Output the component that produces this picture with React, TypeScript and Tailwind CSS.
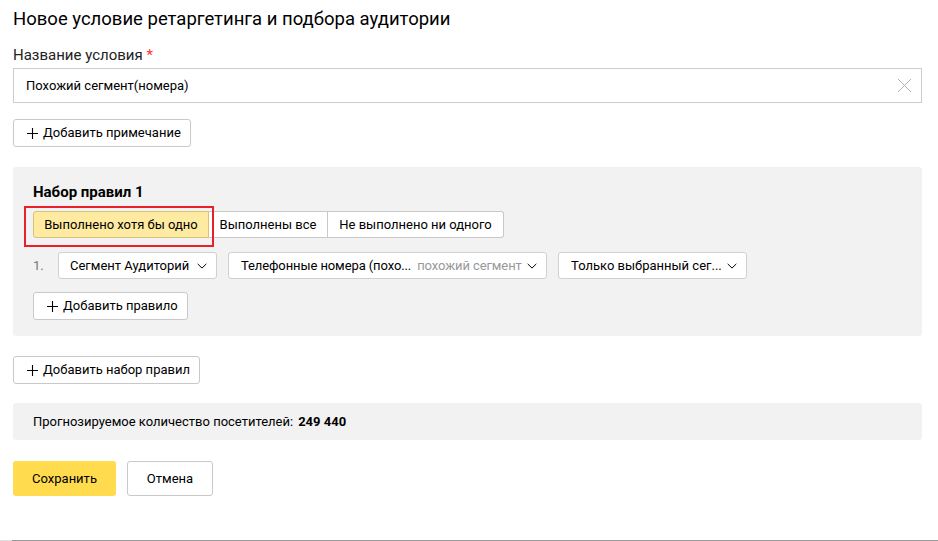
import React from 'react';

function Plus() {
  return (
    <svg width="11" height="11" viewBox="0 0 11 11" className="shrink-0">
      <path d="M5.5 0v11M0 5.5h11" stroke="#000" strokeWidth="1.1" />
    </svg>
  );
}

function Chevron() {
  return (
    <svg width="10" height="6" viewBox="0 0 10 6" className="shrink-0">
      <path d="M0.7 0.9l4.3 4.2L9.3 0.9" stroke="#000" strokeWidth="1" fill="none" />
    </svg>
  );
}

function GhostButton({ children }: { children: React.ReactNode }) {
  return (
    <button className="h-[28px] flex items-center gap-[5px] whitespace-nowrap border border-[#c9c9c9] rounded-[3px] bg-white pl-[13px] pr-[9px] text-[13px] text-black">
      <Plus />
      {children}
    </button>
  );
}

export default function App() {
  return (
    <div className="w-[938px] h-[541px] bg-white text-black flex flex-col overflow-hidden" style={{ fontFamily: 'Roboto, "Liberation Sans", sans-serif' }}>
      <div className="pl-[13px] pr-[16px] flex flex-col">
        {/* Header */}
        <h1 className="text-[18.5px] leading-[22px] mt-[8px] text-black">Новое условие ретаргетинга и подбора аудитории</h1>

        <label className="text-[15px] leading-[18px] mt-[16px] text-[#222]">
          Название условия <span className="text-[#f33]">*</span>
        </label>

        <div className="mt-[4px] h-[35px] border border-[#cccccc] flex items-center justify-between pl-[12px] pr-[9px]">
          <span className="text-[13px]">Похожий сегмент(номера)</span>
          <svg width="15" height="15" viewBox="0 0 15 15">
            <path d="M1 1l13 13M14 1L1 14" stroke="#b3b3b3" strokeWidth="1" />
          </svg>
        </div>

        <div className="mt-[16px] flex">
          <GhostButton>Добавить примечание</GhostButton>
        </div>

        {/* Rule set */}
        <section className="mt-[20px] bg-[#f2f2f2] rounded-[3px] pl-[20px] pr-[20px] pt-[16px] pb-[16px] flex flex-col">
          <h2 className="text-[15px] leading-[18px] font-bold">Набор правил 1</h2>

          <div className="mt-[10px] flex">
            <div className="relative">
              <button className="h-[27px] w-[176px] bg-[#feeaa0] border border-[#d8c178] rounded-l-[3px] text-[13px] whitespace-nowrap">
                Выполнено хотя бы одно
              </button>
              <div className="absolute left-[-9px] top-[-5px] w-[190px] h-[41px] border-2 border-[#e8202a] pointer-events-none" />
            </div>
            <button className="h-[27px] w-[119px] bg-white border-y border-r border-[#c9c9c9] text-[13px] whitespace-nowrap">Выполнены все</button>
            <button className="h-[27px] w-[176px] bg-white border-y border-r border-[#c9c9c9] rounded-r-[3px] text-[13px] whitespace-nowrap">
              Не выполнено ни одного
            </button>
          </div>

          <div className="mt-[14px] flex items-center">
            <span className="w-[25px] text-[13px] text-[#777]">1.</span>
            <button className="h-[27px] w-[159px] bg-white border border-[#d0d0d0] rounded-[3px] flex items-center justify-between gap-[5px] pl-[11px] pr-[9px] text-[13px] whitespace-nowrap">
              <span>Сегмент Аудиторий</span>
              <Chevron />
            </button>
            <button className="ml-[11px] h-[27px] w-[319px] bg-white border border-[#d0d0d0] rounded-[3px] flex items-center justify-between gap-[5px] pl-[12px] pr-[9px] text-[13px] whitespace-nowrap">
              <span className="tracking-[-0.1px]">
                Телефонные номера (похо...<span className="ml-[6px] text-[#999]">похожий сегмент</span>
              </span>
              <Chevron />
            </button>
            <button className="ml-[11px] h-[27px] w-[189px] bg-white border border-[#d0d0d0] rounded-[3px] flex items-center justify-between gap-[5px] pl-[12px] pr-[10px] text-[13px] whitespace-nowrap">
              <span>Только выбранный сег...</span>
              <Chevron />
            </button>
          </div>

          <div className="mt-[13px] flex">
            <GhostButton>Добавить правило</GhostButton>
          </div>
        </section>

        <div className="mt-[20px] flex">
          <GhostButton>Добавить набор правил</GhostButton>
        </div>

        <div className="mt-[19px] h-[37px] bg-[#f2f2f2] rounded-[3px] flex items-center pl-[20px] text-[13px]">
          Прогнозируемое количество посетителей:<span className="ml-[5px] font-bold">249 440</span>
        </div>

        <div className="mt-[21px] flex gap-[11px]">
          <button className="h-[35px] w-[103px] bg-[#ffdb4d] rounded-[3px] text-[13px]">Сохранить</button>
          <button className="h-[35px] w-[86px] bg-white border border-[#c9c9c9] rounded-[3px] text-[13px]">Отмена</button>
        </div>
      </div>

      <div className="mt-auto flex h-px">
        <div className="w-[12px] bg-[#e0e0e0]" />
        <div className="flex-1 bg-[#999]" />
      </div>
    </div>
  );
}
